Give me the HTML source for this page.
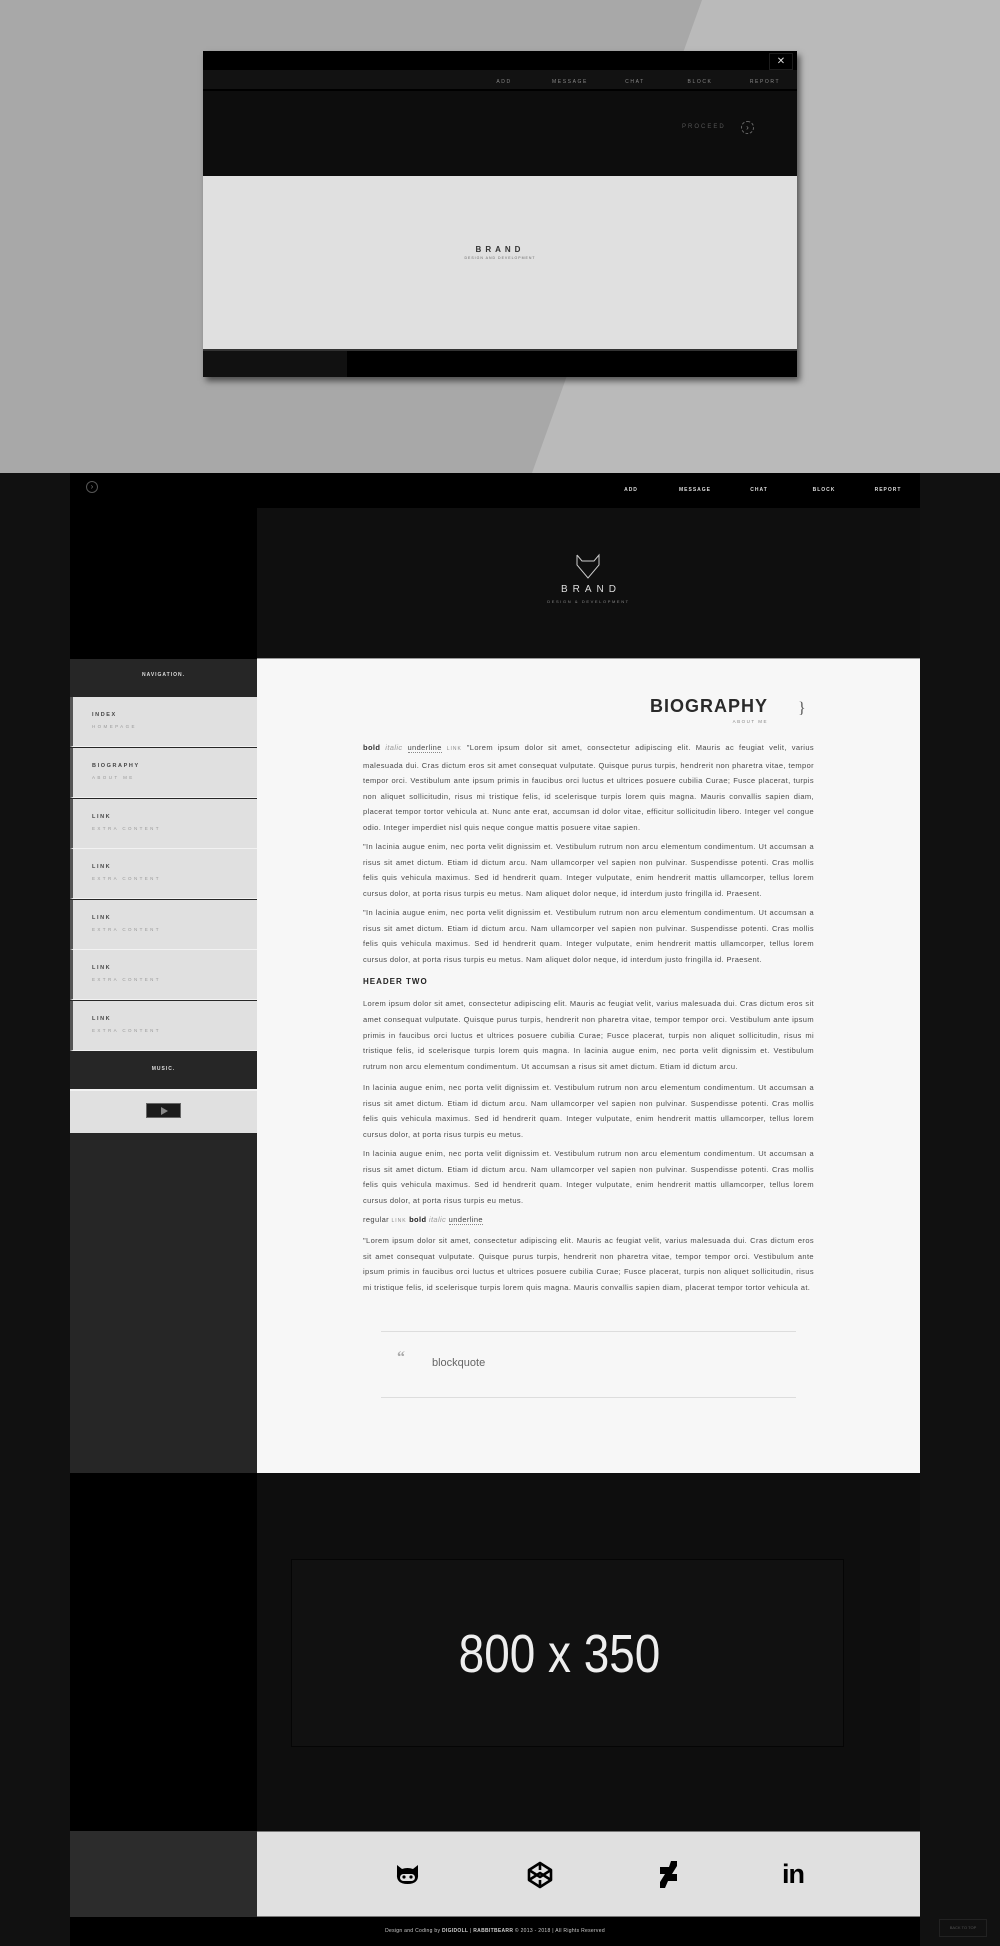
<!DOCTYPE html>
<html><head><meta charset="utf-8">
<style>
*{margin:0;padding:0;box-sizing:border-box}
body{width:1000px;height:1946px;position:relative;overflow:hidden;background:#111;font-family:"Liberation Sans",Arial,sans-serif}
.a{position:absolute}
.top{left:0;top:0;width:1000px;height:473px;background:#a8a8a8;overflow:hidden}
.nl{position:absolute;font-size:5px;letter-spacing:1.6px;color:#888;text-transform:uppercase;transform:translateX(-50%);white-space:nowrap}
.nav2{position:absolute;font-size:5px;font-weight:bold;letter-spacing:1px;color:#ddd;transform:translateX(-50%);white-space:nowrap}
.item{position:absolute;left:70px;width:187px;height:50px;background:#e0e0e0;border-left:3px solid #555;border-bottom:1px solid #f2f2f2}
.item b{position:absolute;left:19px;top:15px;font-size:5.5px;letter-spacing:1.6px;color:#444}
.item i{position:absolute;left:19px;top:27px;font-size:4.5px;letter-spacing:2.4px;color:#999;font-style:normal}
.col{position:absolute;left:363px;top:740px;width:451px}
.col p{font-size:7.5px;line-height:15.6px;letter-spacing:0.38px;color:#4a4a4a;text-align:justify;margin-bottom:3.5px}
.col u{text-decoration:none;border-bottom:1px dotted #888}
.sm{font-size:5px;letter-spacing:1px}
</style></head><body>

<div class="a top">
  <svg class="a" style="left:0;top:0" width="1000" height="473"><polygon points="702,0 1000,0 1000,473 532,473" fill="#bababa"/></svg>
  <div class="a" style="left:203px;top:51px;width:594px;height:326px;background:#000;box-shadow:3px 4px 6px rgba(0,0,0,.55)">
    <div class="a" style="left:566px;top:2px;width:24px;height:17px;border:1px solid #1c1c1c;color:#ddd;font-size:10px;text-align:center;line-height:15px">✕</div>
    <div class="a" style="left:0;top:19px;width:594px;height:20px;background:#121212;border-bottom:1px solid #000"></div>
    <div class="nl" style="left:301px;top:28px">ADD</div>
    <div class="nl" style="left:367px;top:28px">MESSAGE</div>
    <div class="nl" style="left:432px;top:28px">CHAT</div>
    <div class="nl" style="left:497px;top:28px">BLOCK</div>
    <div class="nl" style="left:562px;top:28px">REPORT</div>
    <div class="a" style="left:0;top:40px;width:594px;height:85px;background:#0d0d0d"></div>
    <div class="a" style="left:479px;top:73px;font-size:6px;letter-spacing:2px;color:#555">PROCEED</div>
    <div class="a" style="left:538px;top:70px;width:13px;height:13px;border:1px dashed #666;border-radius:50%;color:#888;font-size:8px;line-height:11px;text-align:center">›</div>
    <div class="a" style="left:0;top:125px;width:594px;height:175px;background:#e0e0e0;border-bottom:2px solid #333"></div>
    <div class="a" style="left:0;top:194px;width:594px;text-align:center;font-size:8px;font-weight:bold;letter-spacing:4px;color:#333">BRAND</div>
    <div class="a" style="left:0;top:205px;width:594px;text-align:center;font-size:3.5px;letter-spacing:1px;color:#666">DESIGN AND DEVELOPMENT</div>
    <div class="a" style="left:0;top:300px;width:144px;height:26px;background:#111"></div>
  </div>
</div>

<div class="a" style="left:70px;top:473px;width:850px;height:35px;background:#000"></div>
<div class="a" style="left:86px;top:481px;width:12px;height:12px;border:1px solid #555;border-radius:50%;color:#777;font-size:8px;line-height:10px;text-align:center">›</div>
<div class="nav2" style="left:631px;top:487px">ADD</div>
<div class="nav2" style="left:695px;top:487px">MESSAGE</div>
<div class="nav2" style="left:759px;top:487px">CHAT</div>
<div class="nav2" style="left:824px;top:487px">BLOCK</div>
<div class="nav2" style="left:888px;top:487px">REPORT</div>

<div class="a" style="left:70px;top:508px;width:187px;height:151px;background:#000"></div>
<div class="a" style="left:257px;top:508px;width:663px;height:151px;background:#0f0f0f"></div>
<svg class="a" style="left:575px;top:553px" width="26" height="28"><polyline points="2,2 2,12 13,25 24,12 24,2 19,8 7,8 2,2" fill="none" stroke="#ccc" stroke-width="1"/></svg>
<div class="a" style="left:257px;top:584px;width:663px;text-align:center;font-size:10px;letter-spacing:5px;color:#ddd;padding-left:5px">BRAND</div>
<div class="a" style="left:257px;top:599px;width:663px;text-align:center;font-size:4px;letter-spacing:1.6px;color:#888">DESIGN &amp; DEVELOPMENT</div>

<div class="a" style="left:70px;top:659px;width:187px;height:814px;background:#262626"></div>
<div class="a" style="left:70px;top:672px;width:187px;text-align:center;font-size:5px;font-weight:bold;letter-spacing:1px;color:#ddd">NAVIGATION.</div>
<div class="item" style="top:697px"><b>INDEX</b><i>HOMEPAGE</i></div>
<div class="item" style="top:748px"><b>BIOGRAPHY</b><i>ABOUT ME</i></div>
<div class="item" style="top:799px"><b>LINK</b><i>EXTRA CONTENT</i></div>
<div class="item" style="top:849px"><b>LINK</b><i>EXTRA CONTENT</i></div>
<div class="item" style="top:900px"><b>LINK</b><i>EXTRA CONTENT</i></div>
<div class="item" style="top:950px"><b>LINK</b><i>EXTRA CONTENT</i></div>
<div class="item" style="top:1001px"><b>LINK</b><i>EXTRA CONTENT</i></div>
<div class="a" style="left:70px;top:1066px;width:187px;text-align:center;font-size:5px;font-weight:bold;letter-spacing:1px;color:#ddd">MUSIC.</div>
<div class="a" style="left:70px;top:1089px;width:187px;height:44px;background:#e0e0e0;border-top:2px solid #f2f2f2"></div>
<div class="a" style="left:146px;top:1103px;width:35px;height:15px;background:#1c1c1c;border:1px solid #666"><div style="position:absolute;left:14px;top:3px;width:0;height:0;border-left:7px solid #888;border-top:4px solid transparent;border-bottom:4px solid transparent"></div></div>

<div class="a" style="left:257px;top:658px;width:663px;height:815px;background:#f7f7f7;border-top:1px solid #999"></div>
<div class="a" style="left:600px;top:695px;width:168px;text-align:right;font-size:18px;letter-spacing:1px;color:#2a2a2a;font-weight:bold;line-height:22px">BIOGRAPHY</div>
<div class="a" style="left:700px;top:719px;width:68px;text-align:right;font-size:4.5px;letter-spacing:1.5px;color:#888">ABOUT ME</div>
<div class="a" style="left:798px;top:700px;font-size:16px;color:#555;font-family:'Liberation Serif',serif">}</div>

<div class="col">
<p><b style="color:#333">bold</b> <i style="color:#999">italic</i> <u>underline</u> <span class="sm" style="color:#888">LINK</span> "Lorem ipsum dolor sit amet, consectetur adipiscing elit. Mauris ac feugiat velit, varius malesuada dui. Cras dictum eros sit amet consequat vulputate. Quisque purus turpis, hendrerit non pharetra vitae, tempor tempor orci. Vestibulum ante ipsum primis in faucibus orci luctus et ultrices posuere cubilia Curae; Fusce placerat, turpis non aliquet sollicitudin, risus mi tristique felis, id scelerisque turpis lorem quis magna. Mauris convallis sapien diam, placerat tempor tortor vehicula at. Nunc ante erat, accumsan id dolor vitae, efficitur sollicitudin libero. Integer vel congue odio. Integer imperdiet nisl quis neque congue mattis posuere vitae sapien.</p>
<p>"In lacinia augue enim, nec porta velit dignissim et. Vestibulum rutrum non arcu elementum condimentum. Ut accumsan a risus sit amet dictum. Etiam id dictum arcu. Nam ullamcorper vel sapien non pulvinar. Suspendisse potenti. Cras mollis felis quis vehicula maximus. Sed id hendrerit quam. Integer vulputate, enim hendrerit mattis ullamcorper, tellus lorem cursus dolor, at porta risus turpis eu metus. Nam aliquet dolor neque, id interdum justo fringilla id. Praesent.</p>
<p>"In lacinia augue enim, nec porta velit dignissim et. Vestibulum rutrum non arcu elementum condimentum. Ut accumsan a risus sit amet dictum. Etiam id dictum arcu. Nam ullamcorper vel sapien non pulvinar. Suspendisse potenti. Cras mollis felis quis vehicula maximus. Sed id hendrerit quam. Integer vulputate, enim hendrerit mattis ullamcorper, tellus lorem cursus dolor, at porta risus turpis eu metus. Nam aliquet dolor neque, id interdum justo fringilla id. Praesent.</p>
<div style="font-size:8px;font-weight:bold;letter-spacing:1px;color:#222;margin:10px 0 10px">HEADER TWO</div>
<p style="margin-bottom:6px">Lorem ipsum dolor sit amet, consectetur adipiscing elit. Mauris ac feugiat velit, varius malesuada dui. Cras dictum eros sit amet consequat vulputate. Quisque purus turpis, hendrerit non pharetra vitae, tempor tempor orci. Vestibulum ante ipsum primis in faucibus orci luctus et ultrices posuere cubilia Curae; Fusce placerat, turpis non aliquet sollicitudin, risus mi tristique felis, id scelerisque turpis lorem quis magna. In lacinia augue enim, nec porta velit dignissim et. Vestibulum rutrum non arcu elementum condimentum. Ut accumsan a risus sit amet dictum. Etiam id dictum arcu.</p>
<p>In lacinia augue enim, nec porta velit dignissim et. Vestibulum rutrum non arcu elementum condimentum. Ut accumsan a risus sit amet dictum. Etiam id dictum arcu. Nam ullamcorper vel sapien non pulvinar. Suspendisse potenti. Cras mollis felis quis vehicula maximus. Sed id hendrerit quam. Integer vulputate, enim hendrerit mattis ullamcorper, tellus lorem cursus dolor, at porta risus turpis eu metus.</p>
<p>In lacinia augue enim, nec porta velit dignissim et. Vestibulum rutrum non arcu elementum condimentum. Ut accumsan a risus sit amet dictum. Etiam id dictum arcu. Nam ullamcorper vel sapien non pulvinar. Suspendisse potenti. Cras mollis felis quis vehicula maximus. Sed id hendrerit quam. Integer vulputate, enim hendrerit mattis ullamcorper, tellus lorem cursus dolor, at porta risus turpis eu metus.</p>
<p style="color:#444">regular <span class="sm" style="color:#888">LINK</span> <b style="color:#222">bold</b> <i style="color:#999">italic</i> <u>underline</u></p>
<p>"Lorem ipsum dolor sit amet, consectetur adipiscing elit. Mauris ac feugiat velit, varius malesuada dui. Cras dictum eros sit amet consequat vulputate. Quisque purus turpis, hendrerit non pharetra vitae, tempor tempor orci. Vestibulum ante ipsum primis in faucibus orci luctus et ultrices posuere cubilia Curae; Fusce placerat, turpis non aliquet sollicitudin, risus mi tristique felis, id scelerisque turpis lorem quis magna. Mauris convallis sapien diam, placerat tempor tortor vehicula at.</p>
</div>

<div class="a" style="left:381px;top:1331px;width:415px;height:67px;border-top:1px solid #ddd;border-bottom:1px solid #ddd"></div>
<div class="a" style="left:397px;top:1349px;font-size:16px;font-weight:bold;color:#aaa;font-family:'Liberation Serif',serif">“</div>
<div class="a" style="left:432px;top:1357px;font-size:11px;color:#666">blockquote</div>

<div class="a" style="left:70px;top:1473px;width:187px;height:358px;background:#000"></div>
<div class="a" style="left:257px;top:1473px;width:663px;height:358px;background:#0e0e0e"></div>
<div class="a" style="left:291px;top:1559px;width:553px;height:188px;background:#111;border:1px solid #050505"></div>
<div class="a" style="left:283px;top:1622px;width:553px;text-align:center;font-size:54px;line-height:64px;color:#eee;transform:scaleX(0.85)">800 x 350</div>

<div class="a" style="left:70px;top:1831px;width:187px;height:86px;background:#2c2c2c"></div>
<div class="a" style="left:257px;top:1831px;width:663px;height:86px;background:#e0e0e0;border-top:1px solid #777;border-bottom:1px solid #777"></div>
<svg class="a" style="left:395px;top:1864px" width="25" height="22" viewBox="0 0 25 22"><path d="M2 1 L7 5 Q12.5 3 18 5 L23 1 L23 10 Q24 20 12.5 20 Q1 20 2 10 Z" fill="#000"/><rect x="5" y="10" width="15" height="7" rx="3.5" fill="#e0e0e0"/><circle cx="9" cy="13" r="1.6" fill="#000"/><circle cx="16" cy="13" r="1.6" fill="#000"/></svg>
<svg class="a" style="left:527px;top:1861px" width="26" height="28" viewBox="0 0 26 28"><g fill="none" stroke="#000" stroke-width="2.6" stroke-linejoin="round"><path d="M13 2 L24 9 L24 19 L13 26 L2 19 L2 9 Z"/><path d="M13 2 L13 9 M2 9 L13 16 L24 9 M13 26 L13 19 M2 19 L13 12 L24 19"/></g></svg>
<svg class="a" style="left:660px;top:1861px" width="18" height="28" viewBox="0 0 18 28"><path d="M11 0 H17 V5 L12 13 H17 V20 H8 L5 27 H0 V21 L5 13 H0 V6 H9 Z" fill="#000"/></svg>
<div class="a" style="left:782px;top:1858px;font-size:27px;font-weight:bold;color:#000;letter-spacing:-1px;line-height:32px">in</div>

<div class="a" style="left:70px;top:1917px;width:850px;height:29px;background:#000"></div>
<div class="a" style="left:70px;top:1928px;width:850px;text-align:center;font-size:5px;color:#ccc;letter-spacing:0.3px">Design and Coding by <b>DIGIDOLL</b> | <b>RABBITBEARR</b> © 2013 - 2018 | All Rights Reserved</div>
<div class="a" style="left:939px;top:1919px;width:48px;height:18px;border:1px solid #222;font-size:4px;color:#555;text-align:center;line-height:16px">BACK TO TOP</div>
</body></html>
